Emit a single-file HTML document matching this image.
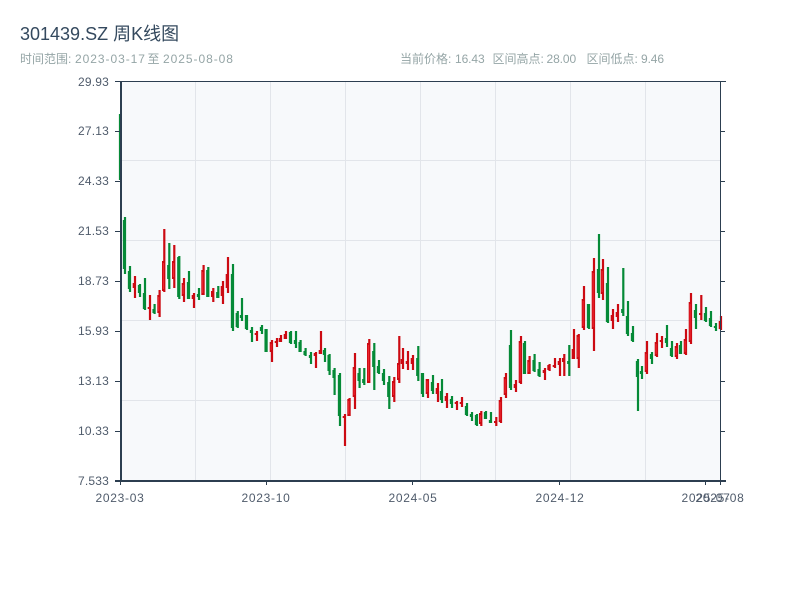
<!DOCTYPE html>
<html lang="zh"><head><meta charset="utf-8"><title>301439.SZ 周K线图</title>
<style>
html,body{margin:0;padding:0;background:#fff;width:800px;height:600px;overflow:hidden}
svg{position:absolute;left:0;top:0;display:block}
text{font-family:"Liberation Sans","Noto Sans CJK SC",sans-serif}
.t{fill:#4f5b6b;font-size:12px}
.x{text-anchor:middle;letter-spacing:.7px}
.y{text-anchor:end;letter-spacing:.2px}
.s{font-size:12px;fill:#95a5a6}
.d{letter-spacing:.95px}
.n{letter-spacing:-.1px}
</style></head><body>
<svg width="800" height="600" viewBox="0 0 800 600" xmlns="http://www.w3.org/2000/svg">
<rect x="120" y="81" width="600" height="400" fill="#f7f9fb"/>
<path d="M195.5 82V480M270.5 82V480M345.5 82V480M420.5 82V480M495.5 82V480M570.5 82V480M645.5 82V480M122 160.5H720M122 240.5H720M122 320.5H720M122 400.5H720" stroke="#e2e5ea" stroke-width="1" fill="none"/>

<path transform="translate(.3 0)" stroke="#058a37" stroke-width="2.2" fill="none" d="M119.7 114V180M124.7 217V274M129.7 266V292M139.7 284V297M144.7 278V310M154.3 304V314M169 243V289M179 256V299M188.7 271V299M198.7 288V300M208 267V297M218 286V298M232.7 264V331M237.5 311V328M241.7 298V321M246.7 315V330M251.7 327V342M261.7 325V334M266.3 329V352M290.7 331V344M295.7 331V348M300.3 340V352M305.3 348V356M310.7 352V364M324.7 348V362M329.3 354V375M334.3 368V395M339.7 373V426M359.3 368V388M364 368V385M374 343V390M378.7 360V374M383.7 369V385M389 376V409M418 346V381M422.7 373V397M432.7 375V394M441.7 379V403M451.7 396V408M466.7 403V416M471.7 412V421M476.7 414V426M485.7 411V419M490.7 412V423M510.7 330V390M524.7 341V374M534.3 354V372M539.3 362V377M569 345V376M588.7 304V329M598.7 234V298M607.7 267V323M623 268V316M627.7 301V336M632.7 326V342M637.7 359V411M641.7 366V379M651.7 352V364M666.7 325V347M671.7 341V357M680.7 341V354M695.7 304V329M705.7 307V322M710.7 311V327M715.7 323V331"/>
<path transform="translate(-.6 0)" stroke="#058a37" stroke-width="2.5" fill="none" d="M124.7 220V269M129.7 271V289M139.7 285V293M144.7 293V309M154.3 309V313M169 265V279M179 257V297M188.7 282V299M198.7 294V297M208 270V297M218 292V298M232.7 274V328M237.5 313V327M241.7 315V318M246.7 315V329M251.7 330V333M261.7 327V331M266.3 329V352M290.7 332V343M295.7 340V344M300.3 342V352M305.3 351V355M310.7 355V358M324.7 350V355M329.3 355V371M334.3 370V378M339.7 375V416M359.3 373V381M364 379V383M374 351V367M378.7 366V373M383.7 373V381M389 382V397M418 358V376M422.7 373V394M432.7 382V391M441.7 391V400M451.7 399V404M466.7 406V415M471.7 414V417M476.7 415V425M485.7 412V419M490.7 420V423M510.7 345V388M524.7 343V374M534.3 360V371M539.3 369V376M569 361V364M588.7 304V328M598.7 269V293M607.7 283V322M623 309V313M627.7 316V334M632.7 333V341M637.7 361V377M641.7 371V374M651.7 354V359M666.7 338V343M671.7 348V356M680.7 345V354M695.7 310V318M705.7 313V321M710.7 318V326M715.7 326V328"/>

<path transform="translate(.3 0)" stroke="#cc0a12" stroke-width="2.2" fill="none" d="M134.7 276V298M149.7 295V320M159.3 290V317M164 229V292M174 245V288M183.7 278V302M193.7 293V308M203.3 265V295M213 288V302M222.7 281V304M227.7 257V293M256.7 331V341M271.7 340V362M276.7 338V347M280.7 335V342M285.7 331V339M315.7 352V368M320.7 331V354M344.7 414V446M349.3 398V416M354.7 353V409M369 339V383M394 377V402M399 336V383M402.7 348V369M407.7 351V370M412.7 355V370M427.7 379V398M437.7 383V402M446.7 393V408M456.7 401V410M461.7 397V407M481 411V426M496 417V426M500.7 397V423M505.7 373V398M515.7 380V392M520.7 336V384M529.3 356V374M544.7 368V380M549.3 364V371M554.7 358V368M559.7 358V376M564 354V376M573.7 329V359M578.5 334V368M583.7 286V330M593.7 258V351M602.7 259V300M612.7 309V329M617.7 304V322M646.7 341V374M656.7 333V357M661.7 336V348M676.7 343V359M685.7 329V355M690.7 293V344M701 295V320M720.7 316V330"/>
<path transform="translate(-.6 0)" stroke="#cc0a12" stroke-width="2.8" fill="none" d="M134.7 283V288M149.7 307V309M159.3 295V313M164 261V291M174 261V279M183.7 283V296M193.7 295V299M203.3 270V295M213 291V297M222.7 286V296M227.7 274V288M256.7 333V335M271.7 342V352M276.7 341V343M280.7 338V342M285.7 334V339M315.7 353V356M320.7 350V354M344.7 416V418M349.3 399V416M354.7 367V397M369 343V383M394 381V397M399 363V380M402.7 359V364M407.7 361V364M412.7 358V364M427.7 379V394M437.7 388V394M446.7 396V401M456.7 402V404M461.7 402V404M481 413V424M496 421V423M500.7 400V422M505.7 377V395M515.7 384V388M520.7 341V383M529.3 360V374M544.7 370V373M549.3 365V370M554.7 365V367M559.7 361V365M564 358V362M573.7 349V359M578.5 335V359M583.7 299V328M593.7 271V329M602.7 269V294M612.7 315V321M617.7 312V317M646.7 352V372M656.7 342V356M661.7 340V342M676.7 346V357M685.7 339V354M690.7 302V342M701 313V315M720.7 321V329"/>
<path transform="translate(-.6 0)" stroke="#f02a34" stroke-width="1" fill="none" d="M159.3 297V311M164 263V289M174 263V277M183.7 285V294M203.3 272V293M271.7 344V350M349.3 401V414M354.7 369V395M369 345V381M394 383V395M399 365V378M427.7 381V392M481 415V422M500.7 402V420M505.7 379V393M520.7 343V381M529.3 362V372M578.5 337V357M583.7 301V326M593.7 273V327M602.7 271V292M646.7 354V370M656.7 344V354M676.7 348V355M685.7 341V352M690.7 304V340"/>

<path d="M115 81.5H726M720.5 81V481" stroke="#2c3e50" stroke-width="1" fill="none"/>
<path d="M121 81V482" stroke="#2c3e50" stroke-width="2" fill="none"/>
<path d="M115 481H726" stroke="#2c3e50" stroke-width="2" fill="none"/>
<path d="M115 131.5H120M115 181.5H120M115 231.5H120M115 281.5H120M115 331.5H120M115 381.5H120M115 431.5H120M720 131.5H725M720 181.5H725M720 231.5H725M720 281.5H725M720 331.5H725M720 381.5H725M720 431.5H725M266.5 482V485M412.5 482V485M559.5 482V485M705.5 482V485M720.5 482V485M120.5 482V485" stroke="#2c3e50" stroke-width="1" fill="none"/>

<text x="20" y="40" font-size="18" fill="#34495e">301439.SZ 周K线图</text>
<text class="s" x="20" y="63">时间范围:</text>
<text class="s d" x="75" y="63">2023-03-17</text>
<text class="s" x="147.500" y="63">至</text>
<text class="s d" x="163" y="63">2025-08-08</text>
<text class="s" x="400" y="63">当前价格:</text>
<text class="s n" x="455" y="63">16.43</text>
<text class="s" x="492.500" y="63">区间高点:</text>
<text class="s n" x="546.500" y="63">28.00</text>
<text class="s" x="586.500" y="63">区间低点:</text>
<text class="s n" x="641" y="63">9.46</text>

<text class="t y" x="109" y="86">29.93</text>
<text class="t y" x="109" y="135">27.13</text>
<text class="t y" x="109" y="185">24.33</text>
<text class="t y" x="109" y="235">21.53</text>
<text class="t y" x="109" y="285">18.73</text>
<text class="t y" x="109" y="335">15.93</text>
<text class="t y" x="109" y="385">13.13</text>
<text class="t y" x="109" y="435">10.33</text>
<text class="t y" x="109" y="485">7.533</text>

<text class="t x" x="120" y="502">2023-03</text>
<text class="t x" x="266" y="502">2023-10</text>
<text class="t x" x="413" y="502">2024-05</text>
<text class="t x" x="560" y="502">2024-12</text>
<text class="t x" x="706" y="502">2025-07</text>
<text class="t x" x="720" y="502">2025-08</text>
</svg>
</body></html>
